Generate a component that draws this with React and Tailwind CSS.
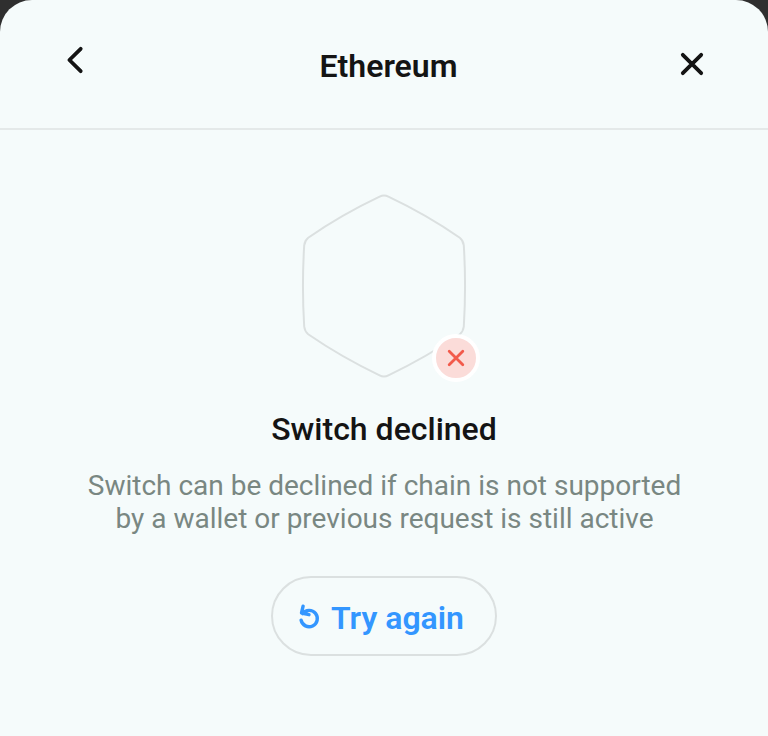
import React from "react";

function Header() {
  return (
    <header className="flex h-[130px] items-start justify-between border-b-2 border-[#e4e9e9] pr-[60px] pl-[60px]">
      <button className="mt-[44px] h-8 w-8" aria-label="Back">
        <svg width="32" height="32" viewBox="0 0 32 32" fill="none">
          <path d="M20.7 4.8 9.4 16 20.7 27.2" stroke="#141414" strokeWidth="3.8" strokeLinecap="round" strokeLinejoin="round" />
        </svg>
      </button>
      <h1 className="mt-[46px] ml-[9px] text-[32px] leading-10 font-semibold whitespace-nowrap text-[#141414]">Ethereum</h1>
      <button className="mt-[48px] h-8 w-8" aria-label="Close">
        <svg width="32" height="32" viewBox="0 0 32 32" fill="none">
          <path d="M6.8 6.8 25.2 25.2M25.2 6.8 6.8 25.2" stroke="#141414" strokeWidth="3.8" strokeLinecap="round" />
        </svg>
      </button>
    </header>
  );
}

function NetworkImage() {
  return (
    <div className="relative mt-[62px] h-[188px] w-[168px]">
      <svg width="168" height="188" viewBox="300 192 168 188" fill="none">
        <path
          d="M379.6 196.7Q384 194.3 388.4 196.7Q427 215 459.8 237.8Q463.2 240.5 463.8 245.5Q466.3 286 463.8 326.5Q463.2 331.5 459.8 334.2Q427 356.8 388.4 375.3Q384 377.5 379.6 375.3Q341 356.8 308.2 334.2Q304.8 331.5 304.2 326.5Q301.7 286 304.2 245.5Q304.8 240.5 308.2 237.8Q341 215 379.6 196.7Z"
          stroke="#dbe0e0"
          strokeWidth="2"
        />
      </svg>
      <div className="absolute -right-[12px] -bottom-[2px] flex h-12 w-12 items-center justify-center rounded-full border-4 border-white bg-[#fbdcd9]">
        <svg width="20" height="20" viewBox="0 0 20 20" fill="none">
          <path d="m3.2 3.2 13.6 13.6M16.8 3.2 3.2 16.8" stroke="#f25a4b" strokeWidth="2.8" strokeLinecap="round" />
        </svg>
      </div>
    </div>
  );
}

export default function App() {
  return (
    <div className="h-[736px] w-[768px] bg-[#2f2f2f] font-['Roboto','Liberation_Sans',sans-serif]">
      <div className="h-full overflow-hidden rounded-t-[32px] bg-[#f5fbfb]">
        <Header />
        <main className="flex flex-col items-center">
          <NetworkImage />
          <h2 className="mt-[29px] text-[32px] leading-10 font-medium text-[#141414]">Switch declined</h2>
          <p className="mt-5 pl-px text-center text-[28px] leading-[33px] whitespace-nowrap text-[#798782]">
            Switch can be declined if chain is not supported
            <br />
            by a wallet or previous request is still active
          </p>
          <button className="mt-[41px] flex h-[80px] w-[226px] items-center justify-center gap-2 rounded-full border-2 border-[#dbe0e0] pr-[9px] text-[#3396ff]">
            <svg width="28" height="28" viewBox="0 0 28 28" fill="none">
              <path
                d="M8.1 4.2 6.5 11 14 12.7M7.6 11.6A8.2 8.2 0 1 1 6.1 18.2"
                stroke="currentColor"
                strokeWidth="3.4"
                strokeLinecap="round"
                strokeLinejoin="round"
              />
            </svg>
            <span className="mt-1 text-[32px] leading-10 font-semibold">Try again</span>
          </button>
        </main>
      </div>
    </div>
  );
}
